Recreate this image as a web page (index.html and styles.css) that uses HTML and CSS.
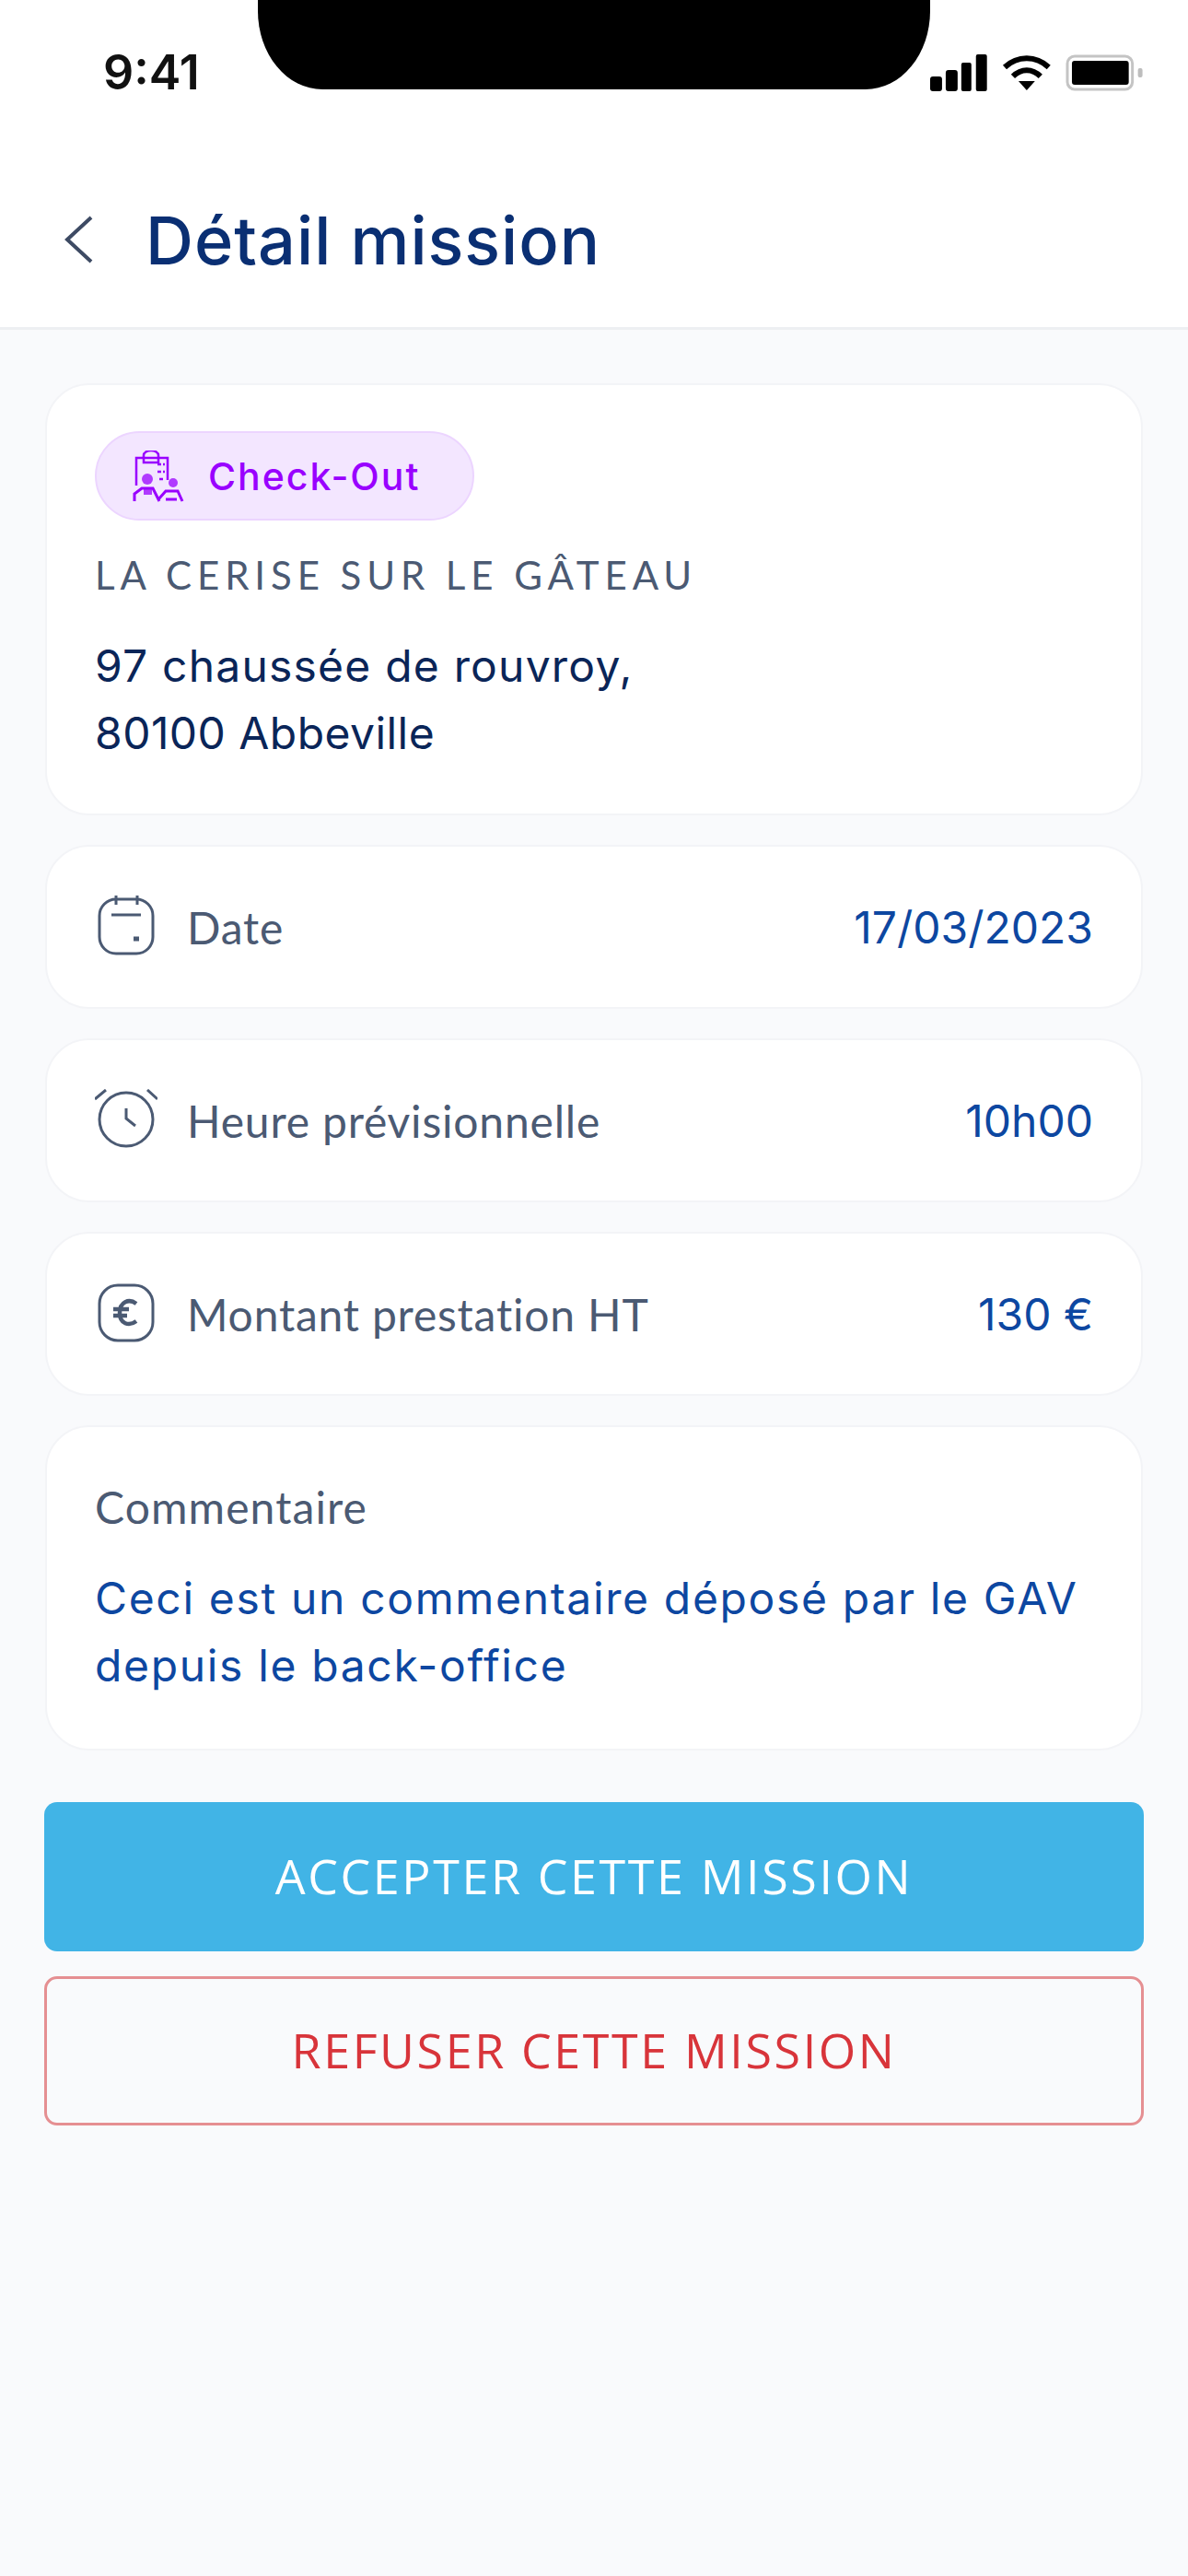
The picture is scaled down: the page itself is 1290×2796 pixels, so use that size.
FILE: index.html
```html
<!DOCTYPE html>
<html lang="fr">
<head>
  <meta charset="UTF-8" />
  <meta name="viewport" content="width=device-width, initial-scale=1.0"/>
  <title>Détail mission</title>
  <link rel="stylesheet" href="styles.css">
</head>
<body>

<header class="top">
  <!-- Status bar -->
  <div class="status-bar">
    <span class="time">9:41</span>
    <div class="notch"></div>
    <div class="status-icons">
      <svg width="62" height="40" viewBox="0 0 62 40" fill="#000">
        <rect x="0" y="24" width="13" height="16" rx="3"/>
        <rect x="17" y="17" width="13" height="23" rx="3"/>
        <rect x="34" y="9" width="11" height="31" rx="2"/>
        <rect x="50" y="0" width="12" height="40" rx="2"/>
      </svg>
      <svg width="54" height="40" viewBox="0 0 54 40" fill="none" stroke="#000" stroke-width="6">
        <path d="M3 14C17 1 37 1 51 14"/>
        <path d="M12 24C21 15 33 15 42 24"/>
        <path d="M18 29h18L27 39z" fill="#000" stroke="none"/>
      </svg>
      <svg width="85" height="40" viewBox="0 0 85 40" fill="none">
        <rect x="2" y="2" width="71" height="36" rx="8" stroke="#c4c4c4" stroke-width="3"/>
        <rect x="7" y="7" width="62" height="26" rx="3" fill="#000"/>
        <rect x="79" y="15" width="5" height="10" rx="2" fill="#bdbdbd"/>
      </svg>
    </div>
  </div>

  <div class="nav">
    <svg class="back" width="36" height="52" viewBox="0 0 36 52" fill="none" stroke="#3d4a63" stroke-width="4">
      <path d="M31 2L5 26l26 24"/>
    </svg>
    <h1>Détail mission</h1>
  </div>
</header>

<main class="content">
  <section class="card card-main">
    <div class="badge">
      <svg width="56" height="56" viewBox="0 0 56 56" fill="none" stroke="#9900ff" stroke-width="2.5">
        <path d="M4 38V8h8V5a8 5 0 0 1 16 0v3h10v24"/>
        <path d="M12 8h16v5H12z"/>
        <path d="M27 15h8M27 23h8M29 31h6" stroke-dasharray="4 2"/>
        <circle cx="16" cy="31" r="6" fill="#9900ff" fill-opacity=".75" stroke="none"/>
        <path d="M2 55v-8l8-6h12l7 14" stroke-width="3"/>
        <path d="M12 42h9v6h-9z" fill="#9900ff" fill-opacity=".75" stroke="none"/>
        <circle cx="44" cy="35" r="5" fill="#9900ff" fill-opacity=".75" stroke="none"/>
        <path d="M28 53l8-9h13l5 11M36 53h12" stroke-width="3"/>
      </svg>
      <span>Check-Out</span>
    </div>
    <p class="shop">LA CERISE SUR LE GÂTEAU</p>
    <p class="address">97 chaussée de rouvroy,<br><span class="city">80100 Abbeville</span></p>
  </section>

  <section class="card row">
    <div class="row-label">
      <svg class="row-icon" width="68" height="68" viewBox="0 0 68 68" fill="none" stroke="#4b5a73" stroke-width="3">
        <rect x="5" y="4" width="58" height="59" rx="18"/>
        <path d="M23 0v10M46 0v10M18 21h32"/>
        <path d="M42 47h6" stroke-width="5"/>
      </svg>
      <span>Date</span>
    </div>
    <span class="value">17/03/2023</span>
  </section>

  <section class="card row">
    <div class="row-label">
      <svg class="row-icon" width="68" height="68" viewBox="0 0 68 68" fill="none" stroke="#4b5a73" stroke-width="3">
        <circle cx="34" cy="33" r="29"/>
        <path d="M34 21v11l10 8M0 11L12 1M68 11L57 1"/>
      </svg>
      <span>Heure prévisionnelle</span>
    </div>
    <span class="value">10h00</span>
  </section>

  <section class="card row">
    <div class="row-label">
      <svg class="row-icon" width="68" height="68" viewBox="0 0 68 68" fill="none" stroke="#4b5a73" stroke-width="3">
        <rect x="5" y="3" width="58" height="60" rx="20"/>
        <path d="M45 23c-8-6-18-2-18 10s10 15 18 9M20 29h17M20 36h15" stroke-width="4.5"/>
      </svg>
      <span>Montant prestation HT</span>
    </div>
    <span class="value">130 €</span>
  </section>

  <section class="card card-comment">
    <p class="comment-title">Commentaire</p>
    <p class="comment">Ceci est un commentaire déposé par le GAV depuis le back-office</p>
  </section>

  <div class="actions">
    <button class="btn btn-accept">ACCEPTER CETTE MISSION</button>
    <button class="btn btn-refuse">REFUSER CETTE MISSION</button>
  </div>
</main>

</body>
</html>
```

FILE: styles.css
```css
* {
  box-sizing: border-box;
}

html, body {
  margin: 0;
  height: 2796px;
  overflow: hidden;
}

body {
  font-family: "Inter", "Liberation Sans", sans-serif;
  background: #f9fafc;
  color: #0a2558;
}

.top {
  height: 358px;
  background: #fff;
  border-bottom: 3px solid #edeff2;
}

.status-bar {
  height: 97px;
  display: flex;
  align-items: flex-start;
  justify-content: space-between;
  padding: 0 48px 0 112px;
}

.time {
  width: 168px;
  margin-top: 50px;
  font-size: 52px;
  line-height: 58px;
  font-weight: 600;
  color: #111;
}

.notch {
  width: 730px;
  height: 97px;
  background: #000;
  border-radius: 0 0 70px 70px / 0 0 85px 85px;
}

.status-icons {
  width: 232px;
  margin-top: 59px;
  display: flex;
  gap: 16px;
  justify-content: flex-end;
}

.nav {
  height: 258px;
  display: flex;
  align-items: center;
  gap: 54px;
  padding: 68px 0 0 68px;
}

.nav h1 {
  margin: 0;
  font-size: 72px;
  font-weight: 500;
  letter-spacing: 1px;
  color: #0a2f73;
}

.content {
  padding: 58px 48px 0;
  display: flex;
  flex-direction: column;
}

.card {
  background: #fff;
  border: 2px solid #f3f4f7;
  border-radius: 48px;
  margin: 0 1px 32px;
}

.card-main {
  height: 469px;
  padding: 50px 52px 0;
}

.badge {
  width: 412px;
  height: 97px;
  display: flex;
  align-items: center;
  gap: 26px;
  padding-left: 39px;
  background: #f3e6ff;
  border: 2px solid #ecd5ff;
  border-radius: 49px;
  color: #9900ff;
  font-size: 41px;
  font-weight: 500;
  letter-spacing: 2px;
}

.shop {
  margin: 34px 0 0;
  font-family: "Lato", "Liberation Sans", sans-serif;
  font-size: 42px;
  letter-spacing: 5.9px;
  color: #4b5a73;
}

.address {
  margin: 37px 0 0;
  font-size: 48px;
  line-height: 73px;
  letter-spacing: 1.2px;
  color: #0a2558;
}

.city {
  letter-spacing: 0.45px;
}

.row {
  height: 178px;
  display: flex;
  align-items: center;
  justify-content: space-between;
  padding: 0 52px;
}

.row-label {
  display: flex;
  align-items: center;
  gap: 32px;
  font-family: "Lato", "Liberation Sans", sans-serif;
  font-size: 48px;
  letter-spacing: 0.8px;
  color: #4b5a73;
}

.row-icon {
  flex: none;
}

.value {
  font-size: 48px;
  color: #0d47a1;
}

.card-comment {
  height: 353px;
  padding: 58px 52px 0;
  margin-bottom: 56px;
}

.comment-title {
  margin: 0;
  font-family: "Lato", "Liberation Sans", sans-serif;
  font-size: 48px;
  letter-spacing: 1.1px;
  color: #4b5a73;
}

.comment {
  margin: 34px 0 0;
  font-size: 48px;
  line-height: 73px;
  letter-spacing: 1.65px;
  color: #0d47a1;
}

.actions {
  display: flex;
  flex-direction: column;
  gap: 27px;
}

.btn {
  height: 162px;
  padding-bottom: 5px;
  border-radius: 14px;
  font-family: "Open Sans", "Liberation Sans", sans-serif;
  font-size: 52px;
  font-weight: 500;
  letter-spacing: 2.6px;
}

.btn-accept {
  background: #41b4e6;
  border: none;
  color: #fff;
}

.btn-refuse {
  background: transparent;
  border: 3px solid #e58f92;
  color: #d8343a;
}
```
